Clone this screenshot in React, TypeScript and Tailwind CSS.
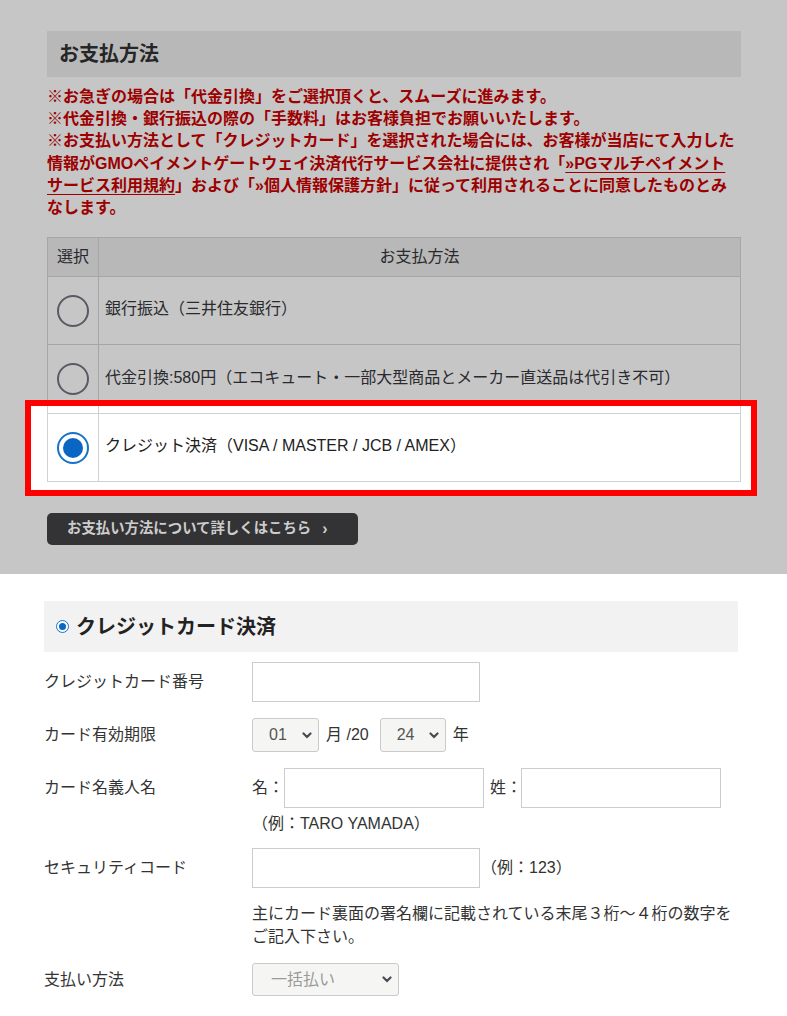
const FONT = "font-['Liberation_Sans','Noto_Sans_CJK_JP',sans-serif]";

function Chevron({ className = "" }: { className?: string }) {
  return (
    <svg width="10" height="7" viewBox="0 0 10 7" className={className}>
      <path d="M1.5 1.5L5 5l3.5-3.5" fill="none" stroke="currentColor" strokeWidth="2.2" strokeLinecap="round" />
    </svg>
  );
}

function FakeSelect({ value, w, h, pl, muted }: { value: string; w: string; h: string; pl: string; muted?: boolean }) {
  return (
    <div
      className={`flex shrink-0 items-center justify-between rounded-[3px] border border-[#cacaca] bg-[#f5f6f3] pr-[6px] text-[16px] ${w} ${h} ${pl} ${
        muted ? "text-[#9a9a9a]" : "text-[#555]"
      }`}
    >
      <span>{value}</span>
      <Chevron className="text-[#4a4a55]" />
    </div>
  );
}

function TextBox({ w }: { w: string }) {
  return <div className={`h-[40px] shrink-0 border border-[#cccccc] bg-white ${w}`} />;
}

function EmptyRadio() {
  return <div className="h-8 w-8 rounded-full border-2 border-[#5a5a66]" />;
}

export default function App() {
  return (
    <div className={`${FONT} min-h-[1016px] bg-white text-[16px]`}>
      {/* dimmed payment selection */}
      <div className="bg-[#c6c6c6] pt-[31px] pb-[29px]">
        <div className="ml-[47px] w-[694px]">
          <h2 className="flex h-[46px] items-center bg-[#b8b8b8] pl-[12px] text-[20px] font-bold text-[#262626]">
            お支払方法
          </h2>
          <p className="mt-[9px] whitespace-nowrap text-[16px] font-bold leading-[22.2px] text-[#9c0000]">
            ※お急ぎの場合は「代金引換」をご選択頂くと、スムーズに進みます。
            <br />
            ※代金引換・銀行振込の際の「手数料」はお客様負担でお願いいたします。
            <br />
            ※お支払い方法として「クレジットカード」を選択された場合には、お客様が当店にて入力した
            <br />
            情報がGMOペイメントゲートウェイ決済代行サービス会社に提供され「
            <a className="underline underline-offset-[3px]">
              »PGマルチペイメント
              <br />
              サービス利用規約
            </a>
            」および「»個人情報保護方針」に従って利用されることに同意したものとみ
            <br />
            なします。
          </p>

          <div className="relative mt-[18px] text-[#2a2a2e]">
            <div className="flex h-[40px] border border-[#a6a6a6] bg-[#b8b8b8]">
              <div className="flex w-[51px] items-center justify-center border-r border-[#a6a6a6]">選択</div>
              <div className="flex flex-1 items-center justify-center">お支払方法</div>
            </div>
            <div className="flex h-[68px] border-x border-b border-[#a6a6a6]">
              <div className="flex w-[51px] items-center justify-center border-r border-[#a6a6a6]">
                <EmptyRadio />
              </div>
              <div className="flex flex-1 items-center pl-[6px] pb-[4px]">銀行振込（三井住友銀行）</div>
            </div>
            <div className="flex h-[68px] border-x border-[#a6a6a6]">
              <div className="flex w-[51px] items-center justify-center border-r border-[#a6a6a6]">
                <EmptyRadio />
              </div>
              <div className="flex flex-1 items-center pl-[6px] pb-[2px]">
                代金引換:580円（エコキュート・一部大型商品とメーカー直送品は代引き不可）
              </div>
            </div>

            {/* highlight frame */}
            <div className="absolute left-[-22px] top-[163px] h-[96px] w-[732px] border-[6px] border-[#ff0000] bg-white">
              <div className="absolute left-[16px] top-0 h-[7px] w-px bg-[#d0d0d0]" />
              <div className="absolute left-[67px] top-0 h-[7px] w-px bg-[#d0d0d0]" />
              <div className="absolute left-[709px] top-0 h-[7px] w-px bg-[#d0d0d0]" />
            </div>

            <div className="relative z-10 flex h-[69px] border border-[#d0d0d0] bg-white text-[#222]">
              <div className="flex w-[51px] items-center justify-center border-r border-[#d0d0d0]">
                <div className="flex h-8 w-8 items-center justify-center rounded-full border-2 border-[#1772c6] bg-white">
                  <div className="h-[20px] w-[20px] rounded-full bg-[#0b66c3]" />
                </div>
              </div>
              <div className="flex flex-1 items-center pl-[6px] pb-[3px]">クレジット決済（VISA / MASTER / JCB / AMEX）</div>
            </div>
          </div>

          <button className="mt-[31px] flex h-[32px] w-[311px] items-center gap-[11px] rounded-[5px] bg-[#333335] pl-[20px] text-[14.4px] font-bold text-[#cdcdcd]">
            <span>お支払い方法について詳しくはこちら</span>
            <span className="text-[16px]">›</span>
          </button>
        </div>
      </div>

      {/* credit card form */}
      <div className="ml-[44px] w-[694px] pt-[27px] text-[#333]">
        <div className="flex h-[51px] items-center gap-[7px] bg-[#f2f2f2] pl-[12px]">
          <div className="flex h-[13px] w-[13px] items-center justify-center rounded-full border-[1.5px] border-[#1a73c8] bg-white">
            <div className="h-[7px] w-[7px] rounded-full bg-[#0b66c3]" />
          </div>
          <h3 className="text-[20px] font-bold text-[#222]">クレジットカード決済</h3>
        </div>

        <div className="mt-[10px] flex items-center">
          <div className="w-[208px]">クレジットカード番号</div>
          <TextBox w="w-[228px]" />
        </div>

        <div className="mt-[16px] flex items-center">
          <div className="w-[208px]">カード有効期限</div>
          <FakeSelect value="01" w="w-[67px]" h="h-[34px]" pl="pl-[16px]" />
          <span className="ml-[7px] mr-[11px]">月 /20</span>
          <FakeSelect value="24" w="w-[66px]" h="h-[34px]" pl="pl-[16px]" />
          <span className="ml-[7px]">年</span>
        </div>

        <div className="mt-[16px] flex">
          <div className="flex h-[40px] w-[208px] items-center">カード名義人名</div>
          <div>
            <div className="flex items-center">
              <span className="w-[32px]">名：</span>
              <TextBox w="w-[200px]" />
              <span className="ml-[6px] w-[31px]">姓：</span>
              <TextBox w="w-[200px]" />
            </div>
            <div className="mt-[5px] leading-[22px]">（例：TARO YAMADA）</div>
          </div>
        </div>

        <div className="mt-[13px] flex items-center">
          <div className="w-[208px]">セキュリティコード</div>
          <TextBox w="w-[228px]" />
          <span className="ml-[1px]">（例：123）</span>
        </div>

        <p className="ml-[208px] mt-[14px] leading-[23px]">
          主にカード裏面の署名欄に記載されている末尾３桁〜４桁の数字を
          <br />
          ご記入下さい。
        </p>

        <div className="mt-[15px] flex items-center">
          <div className="w-[208px]">支払い方法</div>
          <FakeSelect value="一括払い" w="w-[147px]" h="h-[33px]" pl="pl-[18px]" muted />
        </div>
      </div>
    </div>
  );
}
